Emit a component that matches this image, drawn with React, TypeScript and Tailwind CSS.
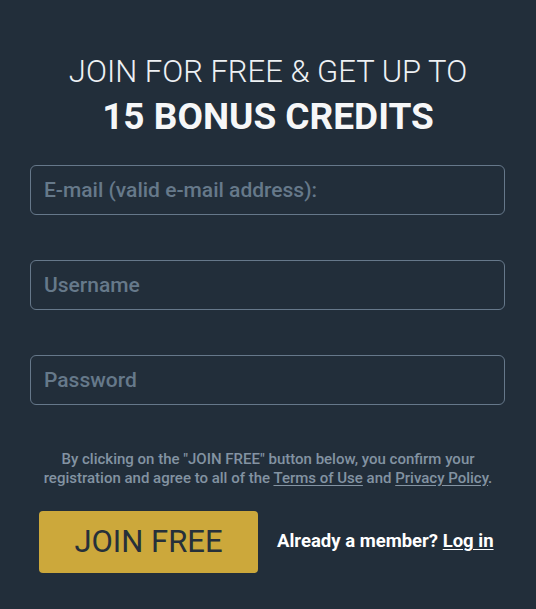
import React from "react";

const fields = ["E-mail (valid e-mail address):", "Username", "Password"];

export default function App() {
  return (
    <div
      className="flex min-h-[609px] w-[536px] flex-col bg-[#222e3a] px-[30px] pt-[54px] text-white"
      style={{ fontFamily: "Roboto, 'Liberation Sans', sans-serif" }}
    >
      <h1 className="text-center text-[31px] font-light leading-[36px] text-[#eef1f4]">
        JOIN FOR FREE &amp; GET UP TO
      </h1>
      <h2 className="mt-[6px] text-center text-[37px] font-bold leading-[42px] text-[#f6f7f8]">
        15 BONUS CREDITS
      </h2>

      <form className="mt-[27px] flex flex-col gap-[45px]" onSubmit={(e) => e.preventDefault()}>
        {fields.map((f) => (
          <input
            key={f}
            type={f === "Password" ? "password" : "text"}
            placeholder={f}
            className="h-[50px] w-[475px] rounded-[6px] border border-[#66788a] bg-transparent px-[13px] text-[21px] font-medium text-white outline-none placeholder:text-[#66798a]"
          />
        ))}
      </form>

      <p className="mt-[45px] text-center text-[15px] font-medium leading-[19px] text-[#8393a2]">
        By clicking on the "JOIN FREE" button below, you confirm your
        <br />
        registration and agree to all of the{" "}
        <a href="#" className="underline underline-offset-2">
          Terms of Use
        </a>{" "}
        and{" "}
        <a href="#" className="underline underline-offset-2">
          Privacy Policy
        </a>
        .
      </p>

      <div className="mt-[23px] flex items-center gap-[19px] pl-[9px]">
        <button className="h-[62px] w-[219px] rounded-[4px] bg-[#cca83b] text-[31px] font-normal text-[#26303a]">
          JOIN FREE
        </button>
        <span className="text-[18.5px] font-bold text-white">
          Already a member?{" "}
          <a href="#" className="underline underline-offset-2">
            Log in
          </a>
        </span>
      </div>
    </div>
  );
}
